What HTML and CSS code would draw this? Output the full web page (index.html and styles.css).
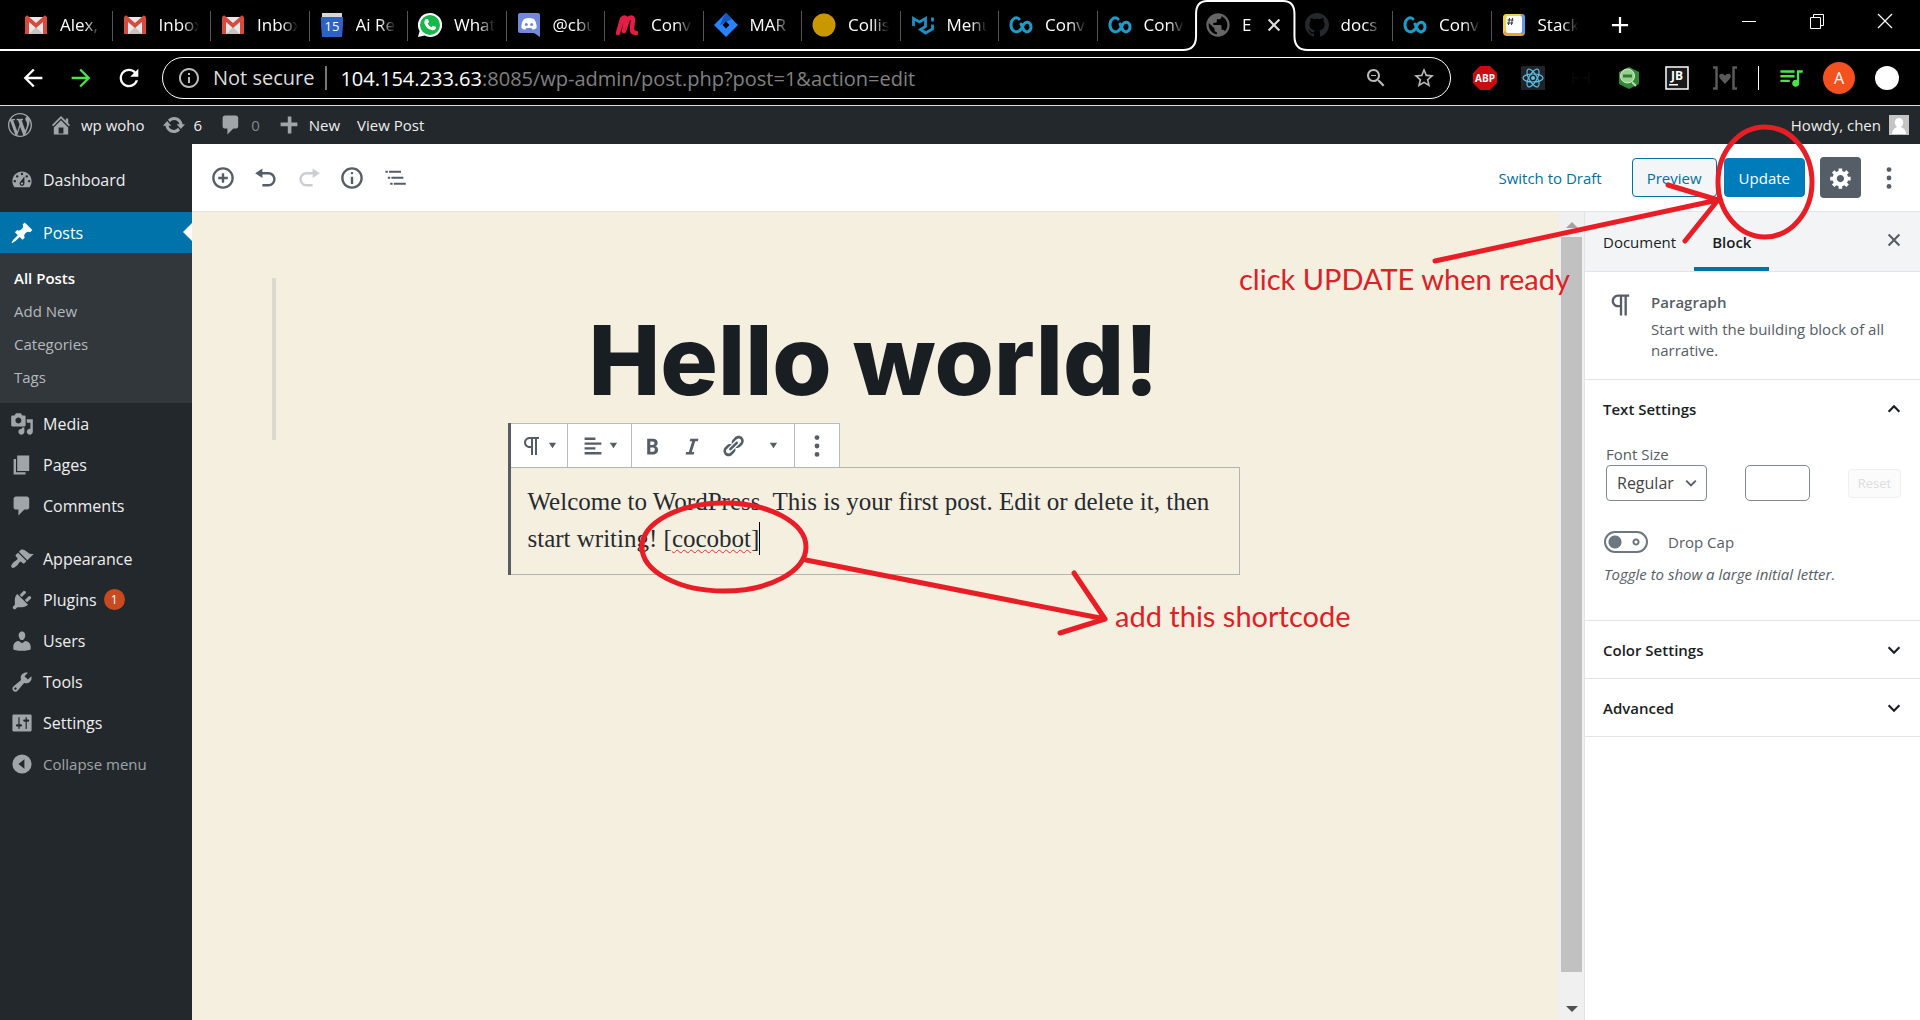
FILE: index.html
```html
<!DOCTYPE html>
<html lang="en">
<head>
<meta charset="utf-8">
<title>Edit Post - wp woho</title>
<link rel="stylesheet" href="styles.css">
</head>
<body>
<svg class="defs" aria-hidden="true">
  <symbol id="gmail" viewBox="0 0 24 24"><path fill="#e8e8e8" d="M2 4h20v17H2z"/><path fill="#c9c4c4" d="M5 21l7-7 7 7z"/><path fill="#d54b3d" d="M1 5c0-2 2-3 3-2l8 7 8-7c1-1 3 0 3 2v16h-4V9l-7 6-7-6v12H1z"/></symbol>
  <symbol id="convo" viewBox="0 0 24 24"><path fill="none" stroke="#1b9cc9" stroke-width="3" stroke-linecap="round" stroke-linejoin="round" d="M10 6C7 3 2 6 2 12s5 8 8 6c3-1 4-7 6-8 3-2 6 0 6 4s-4 6-6 4c-2-1-3-5-4-7"/></symbol>
  <symbol id="chev" viewBox="0 0 20 20"><path fill="none" stroke="currentColor" stroke-width="2.4" d="M4 7l6 6 6-6"/></symbol>
  <symbol id="caret" viewBox="0 0 10 10"><path fill="currentColor" d="M1 2h8L5 8z"/></symbol>
  <symbol id="para" viewBox="0 0 24 24"><path fill="currentColor" d="M11 5v7H9.500C7.600 12 6 10.400 6 8.500S7.600 5 9.500 5H11m8-2H9.500C6.500 3 4 5.500 4 8.500S6.500 14 9.500 14H11v7h2V5h2v16h2V5h2V3z"/></symbol>
  <symbol id="dots" viewBox="0 0 20 20"><circle cx="10" cy="3" r="2"/><circle cx="10" cy="10" r="2"/><circle cx="10" cy="17" r="2"/></symbol>
  <symbol id="comment" viewBox="0 0 20 20"><path d="M5 2h9c1.100 0 2 .9 2 2v7c0 1.100-.9 2-2 2h-2l-5 5v-5H5c-1.100 0-2-.9-2-2V4c0-1.100.9-2 2-2z"/></symbol>
  <symbol id="cross" viewBox="0 0 20 20"><path fill="none" stroke="currentColor" stroke-width="2.400" d="M4 4l12 12M16 4L4 16"/></symbol>
</svg>

<header class="browser">
  <div class="tabstrip">
    <nav class="tabs" aria-label="Tabs">
      <a class="tab" href="#"><svg><use href="#gmail"/></svg><span>Alex,</span></a>
      <a class="tab" href="#"><svg><use href="#gmail"/></svg><span>Inbox</span></a>
      <a class="tab" href="#"><svg><use href="#gmail"/></svg><span>Inbox</span></a>
      <a class="tab" href="#"><svg viewBox="0 0 24 24"><path fill="#d8d8d8" d="M2 0h20v5H2z"/><path fill="#2f62c8" d="M1 4h22v8l-1 12H2L1 12z"/><text class="cal" x="12" y="18" text-anchor="middle">15</text></svg><span>Ai Re</span></a>
      <a class="tab" href="#"><svg viewBox="0 0 24 24"><path fill="#fff" d="M12 0a12 12 0 1 1-5.500 22.600L0 24l1.600-6A12 12 0 0 1 12 0z"/><circle cx="12" cy="12" r="10" fill="#17b84a"/><path fill="#fff" d="M8 6l2 0 1 3-1.300 1.500c.8 1.800 2 2.900 3.800 3.700l1.500-1.500 3 1.300c0 2.500-1.800 3.500-3.700 3.200C10 16.500 6.800 13 6.300 9.500 6.200 8 7 6.500 8 6z"/></svg><span>What</span></a>
      <a class="tab" href="#"><svg viewBox="0 0 24 24"><path fill="#7289da" d="M3 0h18q2 0 2 2v22l-6-4H3q-2 0-2-2V2q0-2 2-2z"/><path fill="#fff" d="M7 6q5-2 10 0 3 4 2.500 9-2 2-4 1.500l-1-1.500h-5l-1 1.500q-2 .5-4-1.500Q4 10 7 6z"/><circle cx="9.300" cy="11.500" r="1.500" fill="#7289da"/><circle cx="14.700" cy="11.500" r="1.500" fill="#7289da"/></svg><span>@cbu</span></a>
      <a class="tab" href="#"><svg viewBox="0 0 24 24"><path fill="none" stroke="#e51d45" stroke-width="4.500" stroke-linecap="round" stroke-linejoin="round" d="M3 20L7 6q3-3 4 0L9 18l4-12q4-3 5 0l-1 10q0 4 4 4"/></svg><span>Conv</span></a>
      <a class="tab" href="#"><svg viewBox="0 0 24 24"><path fill="#2684ff" d="M12 0l12 12-12 12L0 12z"/><path fill="#1455c0" d="M12 0l6 6-6 3-6 3 3-7z"/><path fill="#000" d="M12 8.500l3.500 3.500-3.500 3.500L8.500 12z"/></svg><span>MAR</span></a>
      <a class="tab" href="#"><svg viewBox="0 0 24 24"><circle cx="12" cy="12" r="11.500" fill="#c99700"/></svg><span>Collis</span></a>
      <a class="tab" href="#"><svg viewBox="0 0 24 24"><path fill="none" stroke="#1d8fc4" stroke-width="2.800" d="M2.500 13V5.500l6 3.500 6-3.500v8l-5 3 5 3.500 7-4v-4.500M21.500 8.500V4.500"/></svg><span>Menu</span></a>
      <a class="tab" href="#"><svg><use href="#convo"/></svg><span>Conv</span></a>
      <a class="tab last" href="#"><svg><use href="#convo"/></svg><span>Conv</span></a>
      <a class="tab active" href="#" aria-current="page">
        <svg class="outline" viewBox="0 0 124 51" preserveAspectRatio="none"><path fill="#000" stroke="#fff" stroke-width="2" d="M0 50q13 0 13-14V14Q13 1 24 1h76q11 0 11 13v22q0 14 13 14v2H0"/></svg>
        <svg class="globe" viewBox="0 0 24 24"><path d="M12 2C6.480 2 2 6.480 2 12s4.480 10 10 10 10-4.480 10-10S17.520 2 12 2zm-1 17.930c-3.950-.49-7-3.850-7-7.930 0-.62.08-1.210.21-1.790L9 15v1c0 1.100.9 2 2 2v1.930zm6.900-2.540c-.26-.81-1-1.390-1.900-1.390h-1v-3c0-.55-.45-1-1-1H8v-2h2c.55 0 1-.45 1-1V7h2c1.100 0 2-.9 2-2v-.41c2.930 1.190 5 4.060 5 7.410 0 2.080-.8 3.970-2.100 5.390z"/></svg><span>E</span>
        <svg class="x"><use href="#cross"/></svg></a>
      <a class="tab" href="#"><svg viewBox="0 0 16 16"><path fill="#24292e" d="M8 0C3.580 0 0 3.580 0 8c0 3.540 2.290 6.530 5.470 7.590.4.070.55-.17.55-.38 0-.19-.01-.82-.01-1.490-2.010.37-2.530-.49-2.690-.94-.09-.23-.48-.94-.82-1.130-.28-.15-.68-.52-.01-.53.630-.01 1.080.58 1.230.82.720 1.210 1.870.87 2.330.66.070-.52.28-.87.51-1.070-1.780-.2-3.640-.89-3.640-3.950 0-.87.31-1.590.82-2.150-.08-.2-.36-1.020.08-2.120 0 0 .67-.21 2.200.82.640-.18 1.320-.27 2-.27.680 0 1.360.09 2 .27 1.530-1.040 2.200-.82 2.200-.82.440 1.100.16 1.920.08 2.120.510.56.82 1.270.82 2.150 0 3.070-1.870 3.750-3.650 3.950.290.25.54.73.54 1.480 0 1.070-.01 1.930-.01 2.200 0 .21.15.46.55.38A8 8 0 0016 8c0-4.420-3.580-8-8-8z"/></svg><span>docs</span></a>
      <a class="tab" href="#"><svg><use href="#convo"/></svg><span>Conv</span></a>
      <a class="tab last" href="#"><svg viewBox="0 0 24 24"><rect x="1" y="1" width="22" height="22" rx="4" fill="#e8a33d"/><path fill="#5a9be6" d="M20 1q3 0 3 4v15l-4 1z"/><path fill="#e9d44a" d="M1 20V5q0-4 4-4h14l-2 3z"/><rect x="4" y="3" width="16" height="17" rx="2" fill="#fff"/><path stroke="#333" d="M7.500 5l-1 7M10.500 5l-1 7M5.500 7h6M5 10h6"/></svg><span>Stack</span></a>
    </nav>
    <button class="plain newtab" aria-label="New tab"><svg viewBox="0 0 20 20"><path stroke="#fff" stroke-width="2.500" d="M10 1v18M1 10h18"/></svg></button>
    <div class="winctl">
      <button class="plain" aria-label="Minimize"><svg viewBox="0 0 16 16"><path stroke="#fff" d="M1 8.500h14"/></svg></button>
      <button class="plain" aria-label="Restore"><svg viewBox="0 0 16 16"><path fill="none" stroke="#fff" d="M1.500 4.500h10v11h-10zM4.500 4V1.500h10v11H12"/></svg></button>
      <button class="plain" aria-label="Close"><svg viewBox="0 0 16 16"><path stroke="#fff" stroke-width="1.200" d="M1 1l14 14M15 1L1 15"/></svg></button>
    </div>
  </div>
  <div class="addressrow">
    <div class="navbtns">
      <button class="plain" aria-label="Back"><svg viewBox="0 0 24 24"><path d="M20 11H7.830l5.590-5.590L12 4l-8 8 8 8 1.410-1.410L7.830 13H20v-2z"/></svg></button>
      <button class="plain green" aria-label="Forward"><svg viewBox="0 0 24 24"><path d="M12 4l-1.410 1.410L16.170 11H4v2h12.170l-5.580 5.590L12 20l8-8z"/></svg></button>
      <button class="plain" aria-label="Reload"><svg viewBox="0 0 24 24"><path d="M17.650 6.350C16.200 4.900 14.210 4 12 4c-4.420 0-7.990 3.580-7.990 8s3.570 8 7.990 8c3.730 0 6.840-2.550 7.730-6h-2.080c-.82 2.330-3.040 4-5.650 4-3.310 0-6-2.690-6-6s2.690-6 6-6c1.660 0 3.140.69 4.220 1.780L13 11h7V4l-2.350 2.350z"/></svg></button>
    </div>
    <div class="omnibox">
      <svg viewBox="0 0 24 24"><path d="M11 17h2v-6h-2v6zm1-15C6.480 2 2 6.480 2 12s4.480 10 10 10 10-4.480 10-10S17.520 2 12 2zm0 18c-4.410 0-8-3.590-8-8s3.590-8 8-8 8 3.590 8 8-3.590 8-8 8zM11 9h2V7h-2v2z"/></svg>
      <span class="insecure">Not secure</span>
      <span class="url"><b>104.154.233.63</b>:8085/wp-admin/post.php?post=1&amp;action=edit</span>
      <svg viewBox="0 0 24 24"><path d="M15.500 14h-.79l-.28-.27C15.410 12.590 16 11.110 16 9.500 16 5.910 13.090 3 9.500 3S3 5.910 3 9.500 5.910 16 9.500 16c1.610 0 3.090-.59 4.230-1.570l.27.28v.79l5 4.990L20.490 19l-4.990-5zm-6 0C7.010 14 5 11.990 5 9.500S7.010 5 9.500 5 14 7.010 14 9.500 11.990 14 9.500 14zM7 9h5v1H7z"/></svg>
      <svg class="star" viewBox="0 0 24 24"><path d="M22 9.240l-7.190-.62L12 2 9.190 8.630 2 9.240l5.460 4.730L5.820 21 12 17.270 18.180 21l-1.630-7.030L22 9.240zM12 15.400l-3.760 2.270 1-4.280-3.320-2.880 4.380-.38L12 6.100l1.710 4.040 4.380.38-3.320 2.880 1 4.280L12 15.400z"/></svg>
    </div>
    <div class="exts">
      <svg viewBox="0 0 24 24"><path fill="#c70d0d" d="M7 0h10l7 7v10l-7 7H7l-7-7V7z"/><text class="abp" x="12" y="16" text-anchor="middle">ABP</text></svg>
      <svg viewBox="0 0 24 24"><rect width="24" height="24" rx="1" fill="#20232a"/><g fill="none" stroke="#5cc4e4" stroke-width="1.200"><ellipse cx="12" cy="12" rx="10" ry="4"/><ellipse cx="12" cy="12" rx="10" ry="4" transform="rotate(60 12 12)"/><ellipse cx="12" cy="12" rx="10" ry="4" transform="rotate(120 12 12)"/></g><circle cx="12" cy="12" r="2" fill="#5cc4e4"/></svg>
      <svg viewBox="0 0 24 24"><path fill="none" stroke="#070707" stroke-width="2" d="M4 6v12M20 6v12M4 12h6M14 12h6"/></svg>
      <svg viewBox="0 0 24 24"><path fill="#2f8a35" d="M12 1l10 5v12l-10 5-10-5V6z"/><circle cx="10.500" cy="10" r="7" fill="#9bcf8f"/><circle cx="10.500" cy="10" r="7" fill="none" stroke="#d5ecd0"/><path stroke="#2e7d32" stroke-width="3" d="M6 10h9"/><path stroke="#b9dcb4" stroke-width="2" d="M15 16l4 4"/></svg>
      <svg viewBox="0 0 24 24"><rect x="1" y="1" width="22" height="22" fill="#1a1a1a" stroke="#fff" stroke-width="1.500"/><text class="jb" x="12" y="13.500" text-anchor="middle">JB</text><path fill="#fff" d="M4 18h9v1.500H4z"/></svg>
      <svg viewBox="0 0 24 24"><path fill="none" stroke="#5a5a5a" stroke-width="2.500" d="M0 1.500h3.500v21H0M24 1.500h-3.500v21H24"/><path fill="#5a5a5a" d="M12 18l-5-5.500q-2-3 .5-4.500 2.500-1 4.500 1.500 2-2.500 4.500-1.500 2.500 1.500.5 4.500z"/></svg>
    </div>
    <div class="profile">
      <svg class="music green" viewBox="2 4 20 17"><path d="M15 6H3v2h12V6zm0 4H3v2h12v-2zM3 16h8v-2H3v2zM17 6v8.180c-.31-.11-.65-.18-1-.18-1.660 0-3 1.340-3 3s1.340 3 3 3 3-1.340 3-3V8h3V6h-5z"/></svg>
      <span class="who">A</span>
      <span class="dot"></span>
    </div>
  </div>
</header>

<div class="adminbar">
  <a href="#" aria-label="About WordPress"><svg viewBox="0 0 20 20"><path d="M20 10c0-5.510-4.490-10-10-10C4.480 0 0 4.490 0 10c0 5.520 4.480 10 10 10 5.510 0 10-4.480 10-10zM7.780 15.370L4.370 6.220c.55-.02 1.170-.08 1.170-.08.5-.06.44-1.130-.06-1.110 0 0-1.450.11-2.370.11-.18 0-.37 0-.58-.01C4.120 2.690 6.870 1.110 10 1.110c2.330 0 4.450.87 6.050 2.340-.68-.11-1.650.39-1.650 1.580 0 .74.45 1.360.9 2.100.35.61.55 1.360.55 2.460 0 1.490-1.400 5-1.400 5l-3.030-8.370c.54-.02.82-.17.82-.17.5-.05.44-1.250-.06-1.220 0 0-1.440.12-2.380.12-.87 0-2.330-.12-2.330-.12-.5-.03-.56 1.200-.06 1.220l.92.08 1.260 3.410zM17.410 10c.24-.64.74-1.870.43-4.250.7 1.290 1.050 2.710 1.050 4.250 0 3.290-1.730 6.240-4.400 7.780.97-2.590 1.940-5.200 2.920-7.780zM6.100 18.090C3.120 16.650 1.110 13.530 1.110 10c0-1.300.23-2.480.72-3.590C3.250 10.300 4.670 14.200 6.100 18.090zm4.030-6.630l2.580 6.980c-.86.29-1.760.45-2.710.45-.79 0-1.570-.11-2.290-.33.81-2.380 1.620-4.740 2.420-7.100z"/></svg></a>
  <a href="#"><svg viewBox="0 0 20 20"><path d="M16 8.500l1.530 1.530-1.060 1.060L10 4.600l-6.470 6.490-1.060-1.060L10 2.500l4 4v-2h2v4zm-6-2.460l6 5.990V18H4v-5.970zM12 17v-5H8v5h4z"/></svg>wp woho</a>
  <a href="#"><svg viewBox="0 0 20 20"><path d="M10.200 3.280c3.530 0 6.430 2.610 6.920 6h2.080l-3.500 4-3.500-4h2.320c-.45-1.970-2.210-3.450-4.320-3.450-1.450 0-2.730.71-3.540 1.780L4.950 5.660C6.230 4.200 8.110 3.280 10.200 3.280zm-.4 13.440c-3.520 0-6.430-2.610-6.920-6H.8l3.500-4c1.170 1.330 2.330 2.670 3.500 4H5.480c.45 1.970 2.210 3.450 4.320 3.450 1.450 0 2.730-.71 3.540-1.780l1.710 1.950c-1.280 1.460-3.150 2.380-5.250 2.380z"/></svg>6</a>
  <a href="#" class="muted"><svg><use href="#comment"/></svg>0</a>
  <a href="#"><svg viewBox="0 0 20 20"><path d="M17 8v3h-5v6H9v-6H3V8h6V3h3v5z"/></svg>New</a>
  <a href="#">View Post</a>
  <a href="#" class="howdy">Howdy, chen<svg viewBox="0 0 20 20"><path fill="#c4c4c4" d="M0 0h20v20H0z"/><path fill="#fff" d="M3 19q0-5 5-7-3-3-2-6 1-3 4-3t4 3q1 3-2 6 5 2 5 7z"/></svg></a>
</div>

<div class="wp">
  <nav class="menu" aria-label="Admin menu">
    <a href="#"><svg viewBox="0 0 20 20"><path d="M3.760 16h12.480c1.100-1.370 1.760-3.110 1.760-5 0-4.420-3.580-8-8-8s-8 3.580-8 8c0 1.890.66 3.630 1.760 5zM10 4c.55 0 1 .45 1 1s-.45 1-1 1-1-.45-1-1 .45-1 1-1zM6 6c.55 0 1 .45 1 1s-.45 1-1 1-1-.45-1-1 .45-1 1-1zm8 0c.55 0 1 .45 1 1s-.45 1-1 1-1-.45-1-1 .45-1 1-1zm-5.370 5.550L12 7v6c0 1.100-.9 2-2 2s-2-.9-2-2c0-.57.24-1.080.63-1.450zM4 10c.55 0 1 .45 1 1s-.45 1-1 1-1-.45-1-1 .45-1 1-1zm12 0c.55 0 1 .45 1 1s-.45 1-1 1-1-.45-1-1 .45-1 1-1zm-5 3c0-.55-.45-1-1-1s-1 .45-1 1 .45 1 1 1 1-.45 1-1z"/></svg>Dashboard</a>
    <div class="sep"></div>
    <a href="#" class="current"><svg viewBox="0 0 20 20"><path d="M10.440 3.020l1.820-1.820 6.360 6.350-1.830 1.820c-1.050-.68-2.480-.57-3.410.36l-.75.75c-.92.93-1.040 2.350-.35 3.410l-1.830 1.820-2.410-2.410-2.800 2.790c-.42.42-3.380 2.710-3.800 2.290s1.860-3.390 2.280-3.810l2.790-2.790L4.100 9.360l1.830-1.820c1.050.69 2.480.57 3.400-.36l.75-.75c.93-.92 1.050-2.350.36-3.410z"/></svg>Posts</a>
    <div class="submenu">
      <a href="#" class="on">All Posts</a>
      <a href="#">Add New</a>
      <a href="#">Categories</a>
      <a href="#">Tags</a>
    </div>
    <a href="#"><svg viewBox="0 0 20 20"><path d="M13 11V4c0-.55-.45-1-1-1h-1.670L9 1H5L3.670 3H2c-.55 0-1 .45-1 1v7c0 .55.45 1 1 1h10c.55 0 1-.45 1-1zM7 4.500c1.380 0 2.500 1.120 2.500 2.500S8.380 9.500 7 9.500 4.500 8.380 4.500 7 5.620 4.500 7 4.500zM14 6h5v10.500c0 1.380-1.120 2.500-2.500 2.500S14 17.880 14 16.500s1.120-2.500 2.500-2.500c.17 0 .34.02.5.05V9h-3V6zm-4 8.050V13h2v3.500c0 1.380-1.120 2.500-2.500 2.500S7 17.880 7 16.500 8.120 14 9.500 14c.17 0 .34.02.5.05z"/></svg>Media</a>
    <a href="#"><svg viewBox="0 0 20 20"><path d="M6 15V2h10v13H6zm-1 1h8v2H3V5h2v11z"/></svg>Pages</a>
    <a href="#"><svg><use href="#comment"/></svg>Comments</a>
    <div class="sep"></div>
    <a href="#"><svg viewBox="0 0 20 20"><path d="M14.480 11.060L7.410 3.990l1.500-1.500c.5-.56 2.300-.47 3.510.32 1.210.8 1.430 1.280 2.910 2.100 1.180.64 2.450 1.260 4.450.85zm-.71.71L6.700 4.700 4.930 6.470c-.39.39-.39 1.020 0 1.410l1.060 1.060c.39.39.39 1.030 0 1.420-.6.6-1.430 1.110-2.210 1.690-.35.26-.7.53-1.010.84C1.430 14.230.4 16.080 1.400 17.070c.99 1 2.840-.03 4.180-1.360.31-.31.58-.66.85-1.020.57-.78 1.080-1.610 1.690-2.210.39-.39 1.020-.39 1.410 0l1.060 1.060c.39.39 1.020.39 1.410 0z"/></svg>Appearance</a>
    <a href="#"><svg viewBox="0 0 20 20"><path d="M13.110 4.360L9.870 7.600 8 5.730l3.240-3.240c.35-.34 1.050-.2 1.560.32.52.51.66 1.210.31 1.550zm-8 1.770l.91-1.120 9.010 9.010-1.190.84c-.71.71-2.630 1.160-3.820 1.160H6.140L4.900 17.260c-.59.59-1.540.59-2.120 0-.59-.58-.59-1.530 0-2.120l1.240-1.240v-3.880c0-1.130.4-3.190 1.090-3.890zm7.260 3.970l3.240-3.240c.34-.35 1.040-.21 1.550.31.52.51.66 1.210.31 1.550l-3.240 3.250z"/></svg>Plugins<span class="count">1</span></a>
    <a href="#"><svg viewBox="0 0 20 20"><path d="M10 9.250c-2.270 0-2.730-3.440-2.730-3.440C7 4.020 7.820 2 9.970 2c2.160 0 2.980 2.020 2.710 3.810 0 0-.41 3.440-2.680 3.440zm0 2.570L12.720 10c2.390 0 4.520 2.330 4.520 4.530v2.490s-3.650 1.130-7.240 1.130c-3.650 0-7.240-1.130-7.240-1.130v-2.490c0-2.250 1.940-4.480 4.470-4.480z"/></svg>Users</a>
    <a href="#"><svg viewBox="0 0 20 20"><path d="M16.680 9.770c-1.340 1.340-3.300 1.670-4.950.99l-5.410 6.520c-.99.99-2.590.99-3.580 0s-.99-2.590 0-3.570l6.520-5.420c-.68-1.650-.35-3.610.99-4.950 1.280-1.280 3.120-1.620 4.720-1.060l-2.890 2.890 2.820 2.820 2.860-2.870c.53 1.580.18 3.390-1.080 4.650zM3.810 16.210c.4.39 1.040.39 1.430 0 .4-.4.4-1.040 0-1.430-.39-.4-1.030-.4-1.430 0-.39.39-.39 1.030 0 1.430z"/></svg>Tools</a>
    <a href="#"><svg viewBox="0 0 20 20"><path d="M18 16V4c0-.55-.45-1-1-1H3c-.55 0-1 .45-1 1v12c0 .55.45 1 1 1h14c.55 0 1-.45 1-1zM8 11h1c.55 0 1 .45 1 1s-.45 1-1 1H8v1.500c0 .28-.22.5-.5.5s-.5-.22-.5-.5V13H6c-.55 0-1-.45-1-1s.45-1 1-1h1V5.500c0-.28.22-.5.5-.5s.5.22.5.5V11zm5-2h-1c-.55 0-1-.45-1-1s.45-1 1-1h1V5.500c0-.28.22-.5.5-.5s.5.22.5.5V7h1c.55 0 1 .45 1 1s-.45 1-1 1h-1v5.500c0 .28-.22.5-.5.5s-.5-.22-.5-.5V9z"/></svg>Settings</a>
    <button class="plain collapse"><svg viewBox="0 0 20 20"><path fill-rule="evenodd" d="M10 2a8 8 0 1 1 0 16 8 8 0 0 1 0-16zm2 4l-5 4 5 4z"/></svg>Collapse menu</button>
  </nav>

  <main class="editor">
    <div class="edithead">
      <div class="tools">
        <button class="plain" aria-label="Add block"><svg viewBox="0 0 20 20"><path d="M10 1c-5 0-9 4-9 9s4 9 9 9 9-4 9-9-4-9-9-9zm0 16c-3.900 0-7-3.100-7-7s3.100-7 7-7 7 3.100 7 7-3.100 7-7 7zm1-11H9v3H6v2h3v3h2v-3h3V9h-3V6z"/></svg></button>
        <button class="plain" aria-label="Undo"><svg viewBox="0 0 20 20"><path d="M12 5H7V2L1 6l6 4V7h5c2.200 0 4 1.800 4 4s-1.800 4-4 4H7v2h5c3.300 0 6-2.700 6-6s-2.700-6-6-6z"/></svg></button>
        <button class="plain" aria-label="Redo" disabled><svg viewBox="0 0 20 20"><path d="M8 5h5V2l6 4-6 4V7H8c-2.200 0-4 1.800-4 4s1.800 4 4 4h5v2H8c-3.300 0-6-2.700-6-6s2.700-6 6-6z"/></svg></button>
        <button class="plain" aria-label="Content structure"><svg viewBox="0 0 20 20"><path d="M9 15h2V9H9v6zm1-10c-.5 0-1 .5-1 1s.5 1 1 1 1-.5 1-1-.5-1-1-1zm0-4c-5 0-9 4-9 9s4 9 9 9 9-4 9-9-4-9-9-9zm0 16c-3.900 0-7-3.100-7-7s3.100-7 7-7 7 3.100 7 7-3.100 7-7 7z"/></svg></button>
        <button class="plain" aria-label="Block navigation"><svg viewBox="0 0 20 20"><path d="M2 4h2v1.600H2zM5 4h10v1.600H5zM4 9h2v1.600H4zM7 9h10v1.600H7zM6 14h2v1.600H6zM9 14h10v1.600H9z"/></svg></button>
      </div>
      <div class="actions">
        <button class="plain draft">Switch to Draft</button>
        <button class="btn preview">Preview</button>
        <button class="btn update">Update</button>
        <button class="gear" aria-label="Settings"><svg viewBox="0 0 20 20"><path d="M18 12h-2.180c-.17.7-.44 1.350-.81 1.930l1.540 1.540-2.100 2.100-1.540-1.540c-.58.36-1.230.63-1.910.79V19H8v-2.180c-.68-.16-1.330-.43-1.910-.79l-1.540 1.540-2.120-2.120 1.540-1.540c-.36-.58-.63-1.230-.79-1.910H1V9.030h2.170c.16-.7.44-1.350.8-1.940L2.430 5.550l2.100-2.100 1.540 1.540c.58-.37 1.240-.64 1.930-.81V2h3v2.180c.68.16 1.330.43 1.910.79l1.540-1.540 2.120 2.120-1.540 1.540c.36.59.64 1.240.8 1.940H18V12zm-8.500 1.500c1.660 0 3-1.340 3-3s-1.340-3-3-3-3 1.340-3 3 1.340 3 3 3z"/></svg></button>
        <button class="plain more" aria-label="More"><svg><use href="#dots"/></svg></button>
      </div>
    </div>
    <div class="workspace">
      <section class="canvas">
        <div class="guide"></div>
        <h1>Hello world!</h1>
        <div class="block">
          <div class="toolbar">
            <button aria-label="Change block type" class="w57"><svg><use href="#para"/></svg><svg class="caret"><use href="#caret"/></svg></button>
            <button aria-label="Align" class="w63"><svg viewBox="0 0 20 20"><path d="M12 5V3H3v2h9zm5 4V7H3v2h14zm-5 4v-2H3v2h9zm5 4v-2H3v2h14z"/></svg><svg class="caret"><use href="#caret"/></svg></button>
            <div class="group">
              <button aria-label="Bold"><svg viewBox="0 0 20 20"><path d="M6 4v13h4.540c1.370 0 2.460-.33 3.260-1 .8-.66 1.200-1.580 1.200-2.770 0-.84-.17-1.510-.51-2.010s-.9-.85-1.670-1.030v-.09c.57-.1 1.020-.4 1.360-.9s.51-1.130.51-1.910c0-1.140-.39-1.980-1.170-2.500C12.750 4.260 11.500 4 9.780 4H6zm2.570 5.150V6.260h1.360c.73 0 1.270.11 1.610.32.34.22.51.58.51 1.070 0 .54-.16.92-.47 1.150s-.82.35-1.510.35h-1.500zm0 2.190h1.600c1.440 0 2.160.53 2.160 1.610 0 .6-.17 1.050-.51 1.340s-.86.43-1.570.43H8.570v-3.380z"/></svg></button>
              <button aria-label="Italic"><svg viewBox="0 0 20 20"><path d="M14.780 6h-2.130l-2.800 9h2.120l-.62 2H4.600l.62-2h2.140l2.800-9H8.030l.62-2h6.750z"/></svg></button>
              <button aria-label="Link"><svg viewBox="0 0 20 20"><path d="M17.740 2.760c1.680 1.690 1.680 4.410 0 6.100l-1.530 1.520c-1.120 1.120-2.700 1.470-4.140 1.090l2.620-2.610.76-.77.76-.76c.84-.84.84-2.200 0-3.040-.84-.85-2.200-.85-3.040 0l-.77.76-3.380 3.380c-.37-1.440-.02-3.020 1.100-4.140l1.520-1.530c1.690-1.680 4.420-1.680 6.100 0zM8.590 13.430l5.340-5.340c.42-.42.42-1.100 0-1.520-.44-.43-1.130-.39-1.530 0l-5.330 5.340c-.42.42-.42 1.100 0 1.520.44.43 1.130.39 1.520 0zm-.76 2.290l4.140-4.150c.38 1.440.03 3.020-1.090 4.140l-1.520 1.530c-1.690 1.680-4.410 1.680-6.100 0-1.680-1.680-1.680-4.420 0-6.100l1.530-1.520c1.120-1.120 2.700-1.470 4.140-1.100l-4.140 4.150c-.85.84-.85 2.200 0 3.050.84.84 2.200.84 3.040 0z"/></svg></button>
              <button aria-label="More rich text"><svg class="caret"><use href="#caret"/></svg></button>
            </div>
            <button aria-label="More options" class="w44"><svg><use href="#dots"/></svg></button>
          </div>
          <div class="para">
            <p>Welcome to WordPress. This is your first post. Edit or delete it, then start writing! [<span class="misspelt">cocobot</span>]<span class="cursor"></span></p>
          </div>
          <svg class="note note-code" viewBox="0 0 740 150" role="img" aria-label="add this shortcode">
            <g class="ink"><ellipse cx="85" cy="47" rx="82" ry="44"/><path d="M167 60l299 59M435 73l31 46-45 14"/></g>
            <text x="476" y="127">add this shortcode</text>
          </svg>
        </div>
      </section>
      <div class="scroll" aria-hidden="true">
        <svg viewBox="0 0 12 6"><path fill="#a3a3a3" d="M6 0l6 6H0z"/></svg>
        <div class="thumb"></div>
        <svg viewBox="0 0 12 6"><path fill="#505050" d="M0 0h12L6 6z"/></svg>
      </div>
      <aside class="settings">
        <div class="stabs">
          <button class="plain">Document</button>
          <button class="plain on">Block</button>
          <button class="plain close" aria-label="Close settings"><svg><use href="#cross"/></svg></button>
        </div>
        <section class="info">
          <svg><use href="#para"/></svg>
          <div><h2>Paragraph</h2><p>Start with the building block of all narrative.</p></div>
        </section>
        <section class="panel open">
          <button class="plain head" aria-expanded="true">Text Settings<svg class="up"><use href="#chev"/></svg></button>
          <label class="fslabel" for="fs">Font Size</label>
          <div class="sizes">
            <div class="select"><select id="fs"><option>Regular</option></select><svg><use href="#chev"/></svg></div>
            <input class="num" type="text" aria-label="Custom size">
            <button class="reset" disabled>Reset</button>
          </div>
          <div class="drop"><input type="checkbox" id="dc"><label for="dc">Drop Cap</label></div>
          <p class="help">Toggle to show a large initial letter.</p>
        </section>
        <section class="panel"><button class="plain head">Color Settings<svg><use href="#chev"/></svg></button></section>
        <section class="panel"><button class="plain head">Advanced<svg><use href="#chev"/></svg></button></section>
      </aside>
    </div>
    <svg class="note note-update" viewBox="0 0 700 200" role="img" aria-label="click UPDATE when ready">
      <g class="ink"><ellipse cx="545" cy="82" rx="47" ry="55"/><path d="M215 161l283-61M448 85l50 15-33 41"/></g>
      <text x="19" y="190">click UPDATE when ready</text>
    </svg>
  </main>
</div>
</body>
</html>
```
FILE: styles.css
```css
* { box-sizing: border-box; }
body {
  margin: 0;
  min-height: 100vh;
  display: flex;
  flex-direction: column;
  font-family: "Open Sans", "Noto Sans", sans-serif;
  font-size: 15px;
  color: #555d66;
  overflow-x: hidden;
}
a { color: inherit; text-decoration: none; }
h1, h2, p { margin: 0; }
svg { display: block; flex: none; width: 24px; height: 24px; fill: currentColor; }
.defs { position: absolute; width: 0; height: 0; }
button { font: inherit; color: inherit; padding: 0; cursor: pointer; }
.plain { border: 0; background: none; }
.green { color: #4be34b; }

/* browser chrome */
.browser { background: #000; color: #fff; border-bottom: 1px solid #ddd; }
.tabstrip { display: flex; height: 51px; padding-left: 14px; border-bottom: 2px solid #fff; }
.tabs { flex: 1; display: flex; min-width: 0; }
.tab {
  flex: 1 1 0;
  min-width: 0;
  height: 51px;
  display: flex;
  align-items: center;
  gap: 12px;
  padding: 0 12px 2px 10px;
  font-size: 17px;
  position: relative;
}
.tab span {
  flex: 1;
  min-width: 0;
  overflow: hidden;
  white-space: nowrap;
  -webkit-mask-image: linear-gradient(90deg, #000 60%, transparent);
  mask-image: linear-gradient(90deg, #000 60%, transparent);
}
.tab::after { content: ""; position: absolute; right: 0; top: 11px; height: 30px; border-right: 1px solid #555; }
.tab.last::after, .tab.active::after { display: none; }
.tab.active { gap: 10px; }
.tab .outline { position: absolute; left: -13px; top: 0; width: calc(100% + 26px); height: 51px; }
.tab .globe { position: relative; width: 28px; height: 28px; margin-left: -2px; color: #666; }
.tab.active span { position: relative; }
.tab .x { position: relative; width: 18px; height: 18px; color: #ddd; }
.cal { font-size: 13px; fill: #fff; }
.abp { font-size: 10px; font-weight: 700; fill: #fff; }
.jb { font-size: 12px; font-weight: 700; fill: #fff; }
.newtab { width: 60px; display: grid; place-items: center; }
.newtab svg { width: 18px; height: 18px; }
.winctl { display: flex; width: 270px; justify-content: flex-end; gap: 52px; padding: 0 27px 7px 0; }
.winctl svg { width: 16px; height: 16px; }

.addressrow { display: flex; align-items: center; height: 54px; padding: 0 21px 0 19px; }
.navbtns { display: flex; gap: 20px; }
.navbtns svg { width: 28px; height: 28px; }
.omnibox {
  flex: 1;
  display: flex;
  align-items: center;
  height: 42px;
  margin: 0 22px 0 19px;
  padding: 0 14px;
  border: 1px solid #fff;
  border-radius: 21px;
  font-size: 20px;
  color: #bbb;
}
.insecure { margin-left: 12px; padding-right: 11px; border-right: 2px solid #777; color: #ddd; line-height: 24px; }
.url { flex: 1; margin-left: 13px; color: #808080; }
.url b { font-weight: 400; color: #fff; }
.omnibox .star { margin-left: 24px; }
.exts { display: flex; gap: 24px; }
.profile { display: flex; align-items: center; gap: 20px; height: 24px; margin-left: 21px; padding-left: 20px; border-left: 1px solid #fff; }
.music { height: 20px; }
.who { display: grid; place-items: center; width: 32px; height: 32px; border-radius: 50%; background: #f4511e; font-size: 16px; }
.dot { width: 24px; height: 24px; border-radius: 50%; background: #fff; }

/* admin bar */
.adminbar {
  display: flex;
  align-items: center;
  gap: 17px;
  height: 38px;
  padding: 0 11px 0 8px;
  background: #23282d;
  color: #eee;
  font-size: 15px;
}
.adminbar a { display: flex; align-items: center; gap: 8px; white-space: nowrap; }
.adminbar svg { color: #a0a5aa; }
.adminbar .muted { color: #82878c; }
.adminbar .howdy { margin-left: auto; }
.adminbar .howdy svg { width: 20px; height: 20px; }

.wp { flex: 1; display: flex; }

/* side menu */
.menu { flex: none; width: 192px; padding-top: 15px; background: #23282d; color: #eee; font-size: 16px; }
.menu > a, .collapse { display: flex; align-items: center; gap: 9px; width: 100%; height: 41px; padding-left: 10px; position: relative; }
.menu svg { color: #a0a5aa; }
.sep { height: 12px; }
.menu .current { background: #0073aa; color: #fff; }
.menu .current svg { color: #fff; }
.current::after {
  content: "";
  position: absolute;
  right: 0;
  top: 11px;
  border: 9px solid transparent;
  border-left: 0;
  border-right-color: #fff;
}
.submenu { padding: 9px 0; background: #32373c; font-size: 15px; color: #b4b9be; }
.submenu a { display: block; height: 33px; line-height: 33px; padding-left: 14px; }
.submenu .on { color: #fff; font-weight: 600; }
.count { width: 21px; height: 21px; line-height: 21px; border-radius: 50%; background: #ca4a1f; color: #fff; font-size: 12px; text-align: center; margin-left: -2px; }
.menu .collapse { color: #a0a5aa; font-size: 15px; }

/* editor */
.editor { flex: 1; min-width: 0; display: flex; flex-direction: column; position: relative; background: #fff; }
.edithead { display: flex; justify-content: space-between; align-items: center; height: 68px; padding: 0 19px; border-bottom: 1px solid #e2e4e7; }
.tools { display: flex; gap: 19px; }
.tools button:disabled { opacity: .3; }
.tools svg, .actions svg { width: 24px; height: 24px; }
.actions { display: flex; align-items: center; }
.draft { color: #0071a1; margin-right: 30px; }
.btn { height: 39px; padding: 0 14px; border: 1px solid #0071a1; border-radius: 4px; }
.preview { background: #f3f5f6; color: #0071a1; margin-right: 7px; }
.update { background: #007cba; border-color: #007cba; color: #fff; margin-right: 15px; }
.gear { display: grid; place-items: center; width: 41px; height: 41px; border: 0; border-radius: 4px; background: #555d66; color: #fff; margin-right: 16px; }
.workspace { flex: 1; display: flex; }
.canvas { flex: 1; min-width: 0; position: relative; background: #f5efe0; padding: 98px 4px 0 0; }
.guide { position: absolute; left: 80px; top: 66px; width: 4px; height: 162px; background: #dcd9cd; }
h1 { font: 800 96px/101px "Inter", sans-serif; color: #191e23; text-align: center; height: 113px; }
.block { width: 732px; margin: 0 auto; position: relative; border-left: 3px solid #555d66; }
.toolbar { display: flex; width: 329px; height: 45px; background: #fff; border: 1px solid #b5bcc2; border-left: 0; }
.toolbar button { display: flex; align-items: center; justify-content: center; gap: 4px; border: 0; background: none; color: #555d66; }
.toolbar > button { border-right: 1px solid #b5bcc2; }
.toolbar > button:last-child { border-right: 0; }
.toolbar svg { width: 24px; height: 24px; }
.toolbar .caret { width: 9px; height: 9px; }
.w57 { width: 57px; }
.w63 { width: 64px; gap: 9px; }
.w44 { width: 44px; }
.group { flex: 1; display: flex; border-right: 1px solid #b5bcc2; }
.group button { flex: 1; }
.para { margin-top: -1px; padding: 15px 16px 17px 17px; border: 1px solid #b0b5b3; border-left: 0; }
.para p { font: 25px/37px "Liberation Serif", serif; color: #262b2f; }
.misspelt { text-decoration: underline wavy #d33 1px; text-underline-offset: 2px; }
.cursor { border-left: 1px solid #000; padding: 3px 0; }

.scroll { flex: none; width: 25px; display: flex; flex-direction: column; align-items: center; background: #f0f0f0; padding: 10px 0 8px; }
.scroll svg { width: 12px; height: 6px; }
.thumb { flex: 1; width: 21px; margin: 9px 0 34px; background: #c1c1c1; }

.settings { flex: none; width: 336px; border-left: 1px solid #e2e4e7; background: #fff; font-size: 15px; }
.stabs { display: flex; height: 60px; background: #f3f4f5; border-bottom: 1px solid #e2e4e7; color: #191e23; }
.stabs button { padding: 4px 18px 0; border-bottom: 4px solid transparent; }
.stabs .on { font-weight: 600; border-color: #0073aa; }
.stabs .close { margin-left: auto; padding: 0 17px; color: #555d66; }
.close svg { width: 18px; height: 18px; }
.info { display: flex; gap: 16px; padding: 19px 16px 18px 22px; height: 107px; }
.info svg { width: 28px; height: 28px; }
.info h2 { font-size: 15px; font-weight: 600; line-height: 22px; padding-bottom: 6px; }
.info p { line-height: 21px; }
.panel { border-top: 1px solid #e2e4e7; }
.panel:last-child { border-bottom: 1px solid #e2e4e7; }
.head { display: flex; align-items: center; justify-content: space-between; width: 100%; height: 57px; padding: 0 17px 0 18px; color: #191e23; font-weight: 600; }
.head svg { width: 18px; height: 18px; }
.head .up { transform: rotate(180deg); }
.open { height: 241px; }
.fslabel { display: block; padding: 7px 21px 0; line-height: 21px; }
.sizes { display: flex; align-items: center; justify-content: space-between; padding: 0 19px 0 21px; }
.select { position: relative; }
.select select { appearance: none; width: 101px; height: 36px; padding: 0 10px; border: 1px solid #7e8993; border-radius: 4px; background: #fff; font: inherit; font-size: 16px; color: #444; }
.select svg { position: absolute; right: 8px; top: 10px; width: 16px; height: 16px; pointer-events: none; }
.num { width: 65px; height: 36px; border: 1px solid #7e8993; border-radius: 5px; }
.reset { width: 53px; height: 29px; border: 1px solid #f0f0f0; border-radius: 4px; background: #fbfbfb; color: #ddd; font-size: 13px; }
.drop { display: flex; align-items: center; gap: 20px; padding: 29px 19px 8px; line-height: 24px; }
.drop input {
  appearance: none;
  margin: 0;
  width: 44px;
  height: 22px;
  border: 2px solid #6c7781;
  border-radius: 11px;
  background:
    radial-gradient(circle at 9px 9px, #6c7781 6px, transparent 7px),
    radial-gradient(circle at 30px 9px, #fff 1px, #6c7781 2px, #6c7781 3px, transparent 4px);
}
.help { padding: 0 19px; font-style: italic; line-height: 24px; }

/* hand-drawn notes */
.note { position: absolute; pointer-events: none; fill: #dc2127; font: 29px "Lato", sans-serif; }
.ink { fill: none; stroke: #e81d25; stroke-width: 5; stroke-linecap: round; stroke-linejoin: round; }
.note-code { width: 740px; height: 150px; left: 128px; top: 77px; }
.note-update { width: 700px; height: 200px; right: 0; top: -44px; }
```
